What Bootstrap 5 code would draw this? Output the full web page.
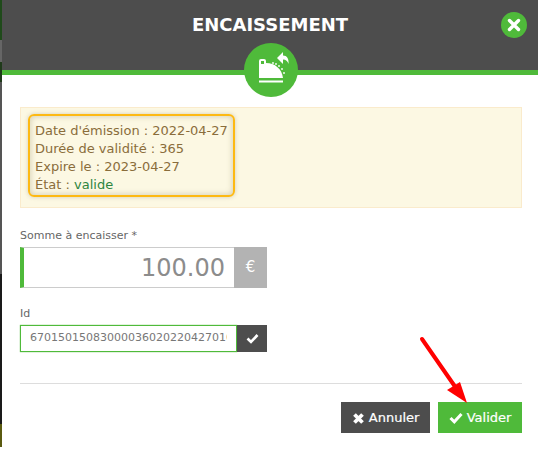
<!DOCTYPE html>
<html lang="fr">
<head>
    <meta charset="UTF-8">
    <meta name="viewport" content="width=device-width, initial-scale=1.0">
    <title>Encaissement</title>
    <link href="https://cdn.jsdelivr.net/npm/bootstrap@5.3.3/dist/css/bootstrap.min.css" rel="stylesheet" />
    <style>
        body {
            /* page behind the dialog, only a 2px strip shows on the left */
            background: linear-gradient(to bottom,
                #1f4a1a 0, #1f4a1a 40px,
                #666 40px, #666 62px,
                #1f3a1a 62px, #1f3a1a 82px,
                #555 82px, #555 274px,
                #1a1a1a 274px, #1a1a1a 424px,
                #5a5a10 424px, #5a5a10 447px,
                #fff 447px);
            font-family: "DejaVu Sans", sans-serif;
            margin: 0;
            height: 451px;
            overflow: hidden;
        }

        .dlg-wrap {
            margin-left: 2px;
            height: 451px;
            background-color: #fff;
            position: relative;
        }

        /* Header */
        .dlg-head {
            height: 75px;
            background-color: #4d4d4d;
            border-bottom: 5px solid #4fba3a;
            position: relative;
        }

        .dlg-title {
            color: #fff;
            font-size: 18px;
            font-weight: 700;
            line-height: 20px;
            padding-top: 15px;
            margin: 0;
            text-align: center;
        }

        .dlg-close {
            position: absolute;
            top: 12px;
            right: 11px;
            width: 26px;
            height: 26px;
            border-radius: 50%;
            border: 0;
            padding: 0;
            background-color: #4fba3a;
        }

        .dlg-badge {
            position: absolute;
            top: 43px;
            left: 242px;
            width: 54px;
            height: 54px;
            padding: 0 0 5px 6px;
            border-radius: 50%;
            background-color: #4fba3a;
        }

        .dlg-body {
            padding: 32px 16px 0 18px;
        }

        /* Info block */
        .info-box {
            height: 101px;
            padding: 6px 7px;
            background-color: #fcf8e3;
            border: 1px solid #faebcc;
            color: #8a6d3b;
            font-size: 13px;
        }

        .info-hl {
            width: 207px;
            height: 83px;
            padding: 6px 5px;
            line-height: 18px;
            border: 2px solid #fdb913;
            border-radius: 6px;
            box-shadow: inset 0 0 6px rgba(120, 110, 70, .35), 0 0 4px rgba(120, 110, 70, .3);
            white-space: nowrap;
        }

        .state-ok {
            color: #2e8540;
        }

        /* Form */
        .fld-block {
            margin-top: 21px;
        }

        .fld-label {
            display: block;
            color: #666;
            font-size: 11px;
            line-height: 14px;
            margin: 0 0 4px;
        }

        .amount-wrap {
            width: 247px;
            height: 41px;
            margin-bottom: 19px;
        }

        .amount-input {
            flex: 1;
            min-width: 0;
            border: 0;
            border-top: 1px solid #ccc;
            border-bottom: 1px solid #ccc;
            border-left: 4px solid #4fba3a;
            border-radius: 0;
            padding: 0 9px 0 0;
            color: #8c8c8c;
            font-size: 24px;
            text-align: right;
            font-family: "DejaVu Sans", sans-serif;
        }

        .amount-unit {
            width: 33px;
            background-color: #b3b3b3;
            color: #fff;
            font-size: 15px;
        }

        .id-wrap {
            width: 247px;
            height: 27px;
        }

        .id-input {
            width: 217px;
            border: 1px solid #4fba3a;
            box-shadow: 0 0 1px #4fba3a;
            border-radius: 0;
            padding: 0 9px;
            color: #777;
            font-size: 11px;
            font-family: "DejaVu Sans", sans-serif;
        }

        .id-btn {
            width: 30px;
            background-color: #4d4d4d;
            border: 0;
            padding: 0;
        }

        .dlg-sep {
            margin: 31px 0 18px;
            border: 0;
            border-top: 1px solid #ddd;
            opacity: 1;
        }

        .act-btn {
            height: 31px;
            border: 0;
            border-radius: 0;
            padding: 0;
            color: #fff;
            font-size: 13px;
            font-weight: 500;
            -webkit-text-stroke: .2px #fff;
        }

        .act-btn:hover {
            color: #fff;
        }

        .act-cancel {
            width: 89px;
            background-color: #4d4d4d;
        }

        .act-cancel:hover {
            background-color: #4d4d4d;
        }

        .act-ok {
            width: 84px;
            background-color: #4fba3a;
        }

        .act-ok:hover {
            background-color: #4fba3a;
        }

        /* Red annotation arrow */
        .note-arrow {
            position: absolute;
            left: 410px;
            top: 330px;
        }
    </style>
</head>
<body>

    <div class="dlg-wrap">
        <!-- Header -->
        <div class="dlg-head">
            <h5 class="dlg-title">ENCAISSEMENT</h5>
            <button class="dlg-close d-flex align-items-center justify-content-center" type="button" aria-label="Fermer">
                <svg width="14" height="14" viewBox="0 0 14 14"><path d="M2.500 2.500l9 9M11.500 2.500l-9 9" stroke="#fff" stroke-width="3.400" stroke-linecap="round"/></svg>
            </button>
            <div class="dlg-badge d-flex align-items-center justify-content-center">
                <svg width="30" height="31" viewBox="0 0 30 31" fill="#fff">
                    <path d="M0 9a2 2 0 0 1 2-2h3a2 2 0 0 1 2 2v2c9 0 16 6 17 15H0z"/>
                    <rect y="28.500" width="24" height="2"/>
                    <rect x="2" y="9" width="3" height="3" fill="#4fba3a"/>
                    <circle cx="14" cy="11" r=".9"/><circle cx="17" cy="12" r=".9"/><circle cx="20" cy="14" r=".9"/><circle cx="23" cy="17" r=".9"/><circle cx="25" cy="21" r=".9"/>
                    <path d="M18 6L24 0v3.500c4 0 6 3 5.500 8.500-1-3-2.500-4.500-5.500-4.500V12z"/>
                </svg>
            </div>
        </div>

        <div class="dlg-body">
            <!-- Info -->
            <div class="info-box">
                <div class="info-hl">
                    Date d'émission : 2022-04-27<br>
                    Durée de validité : 365<br>
                    Expire le : 2023-04-27<br>
                    État : <span class="state-ok">valide</span>
                </div>
            </div>

            <!-- Form -->
            <div class="fld-block">
                <label class="fld-label">Somme à encaisser *</label>
                <div class="amount-wrap d-flex">
                    <input class="amount-input" type="text" value="100.00">
                    <span class="amount-unit d-flex align-items-center justify-content-center">€</span>
                </div>

                <label class="fld-label">Id</label>
                <div class="id-wrap d-flex">
                    <input class="id-input" type="text" value="67015015083000036020220427010">
                    <button class="id-btn d-flex align-items-center justify-content-center" type="button" aria-label="Valider l'id">
                        <svg width="13" height="11" viewBox="0 0 13 11"><path d="M1.500 5.500l3.500 3.500 6.500-7" fill="none" stroke="#fff" stroke-width="2.600"/></svg>
                    </button>
                </div>
            </div>

            <hr class="dlg-sep">

            <!-- Actions -->
            <div class="d-flex justify-content-end gap-2">
                <button class="btn act-btn act-cancel" type="button">
                    <svg width="13" height="13" viewBox="0 0 13 13"><path d="M2.500 2.500l8 8M10.500 2.500l-8 8" stroke="#fff" stroke-width="3.800"/></svg>
                    Annuler
                </button>
                <button class="btn act-btn act-ok" type="button">
                    <svg width="14" height="12" viewBox="0 0 14 12"><path d="M1.500 6l3.800 3.800L12.500 2" fill="none" stroke="#fff" stroke-width="3"/></svg>
                    Valider
                </button>
            </div>
        </div>

        <svg class="note-arrow" width="70" height="80" viewBox="0 0 70 80">
            <path d="M10 9L44 58" stroke="#f00" stroke-width="4" stroke-linecap="round"/>
            <path d="M55 73L35 60 48 52z" fill="#f00"/>
        </svg>
    </div>

</body>
</html>
